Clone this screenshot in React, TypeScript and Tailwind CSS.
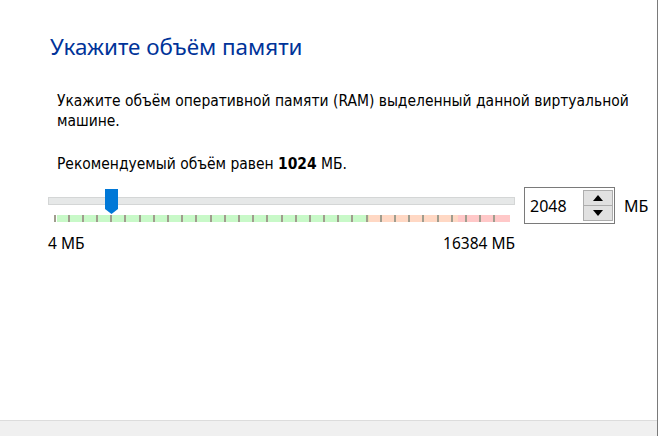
import React from "react";

const body = { fontFamily: '"DejaVu Sans Condensed", "DejaVu Sans", sans-serif' };
const ui = { fontFamily: '"Noto Sans", "Open Sans", sans-serif' };

function TickStrip() {
  const ticks = Array.from({ length: 32 }, (_, k) => 53.5 + 14.19 * k - 48);
  return (
    <svg width="467" height="7" viewBox="0 0 467 7" className="block">
      <rect x="9" y="0" width="310" height="7" fill="#c8f9c8" />
      <rect x="319" y="0" width="2" height="7" fill="#e3e0b0" />
      <rect x="321" y="0" width="89" height="7" fill="#ffd8c4" />
      <rect x="410" y="0" width="52" height="7" fill="#ffc8c8" />
      {ticks.map((x, i) => (
        <rect key={i} x={Math.round(x)} y="0" width="2" height="7" fill="#a09d8e" />
      ))}
    </svg>
  );
}

export default function App() {
  return (
    <div className="w-[658px] h-[436px] bg-white flex flex-col border-r border-[#7a7a7a] overflow-hidden">
      <div className="flex-1 flex flex-col">
        <div
          className="pl-[50px] pt-[33px] text-[22.4px] leading-[28px] text-[#003399]"
          style={ui}
        >
          Укажите объём памяти
        </div>
        <div
          className="pl-[57px] pt-[30px] pr-[8px] text-[15.45px] leading-[20px] text-black font-stretch-condensed"
          style={body}
        >
          Укажите объём оперативной памяти (RAM) выделенный данной виртуальной машине.
        </div>
        <div
          className="pl-[57px] pt-[23px] text-[15.45px] leading-[20px] text-black font-stretch-condensed"
          style={body}
        >
          Рекомендуемый объём равен <b>1024</b> МБ.
        </div>
        <div className="flex items-start pl-[48px] pt-[15px]">
          <div className="w-[467px] relative pt-[8px]">
            <div className="h-[8px] bg-[#e6e8e8] border border-[#d4d6d6]" />
            <svg
              width="13"
              height="25"
              viewBox="0 0 13 25"
              className="absolute left-[57px] top-0"
            >
              <polygon points="0,0 13,0 13,20 6.5,25 0,20" fill="#0078d7" />
            </svg>
            <div className="pt-[10px]">
              <TickStrip />
            </div>
            <div
              className="flex justify-between pt-[11px] text-[15.5px] leading-[20px] text-black"
              style={ui}
            >
              <span>4 МБ</span>
              <span>16384 МБ</span>
            </div>
          </div>
          <div className="ml-[9px] -mt-[2px] w-[91px] h-[37px] border border-[#7a7a7a] flex items-center pl-[5px] pr-[1px]">
            <span className="flex-1 text-[16px] text-black" style={ui}>
              2048
            </span>
            <div className="flex flex-col w-[30px] h-[31px]">
              <div className="flex-1 bg-[#e1e1e1] border border-[#adadad] flex items-center justify-center">
                <svg width="10" height="6" viewBox="0 0 10 6">
                  <polygon points="5,0 10,6 0,6" fill="#000" />
                </svg>
              </div>
              <div className="flex-1 bg-[#e1e1e1] border border-t-0 border-[#adadad] flex items-center justify-center">
                <svg width="10" height="6" viewBox="0 0 10 6">
                  <polygon points="0,0 10,0 5,6" fill="#000" />
                </svg>
              </div>
            </div>
          </div>
          <div className="ml-[9px] -mt-[2px] h-[37px] flex items-center text-[16px] text-black" style={ui}>
            МБ
          </div>
        </div>
      </div>
      <div className="h-[16px] bg-[#f0f0f0] border-t border-[#dcdcdc]" />
    </div>
  );
}
